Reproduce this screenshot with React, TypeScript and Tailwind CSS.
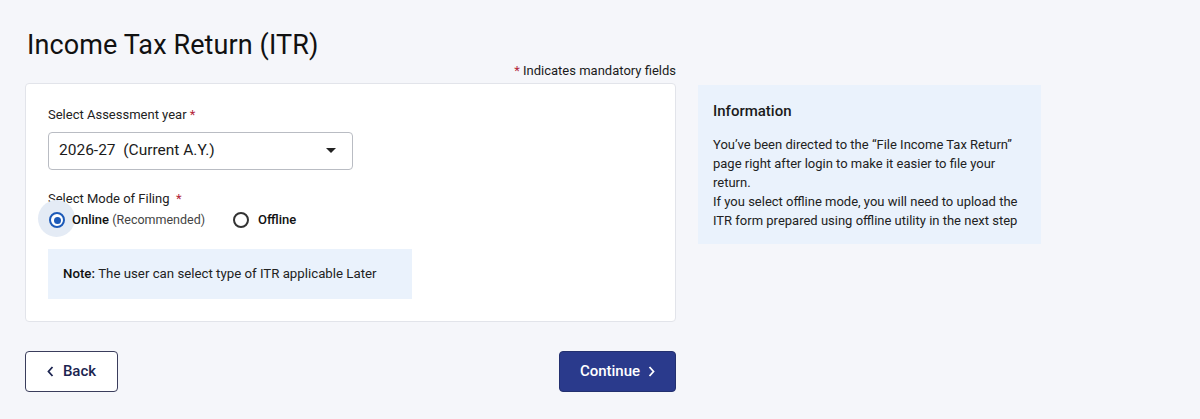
export default function App() {
  return (
    <main
      className="min-h-screen w-full bg-[#f5f6fa] text-[#1b1b1b] pl-[25px] pt-[27px]"
      style={{ fontFamily: "Roboto, 'Noto Sans', sans-serif" }}
    >
      <h1 className="text-[27px] leading-[36px] font-normal text-[#111] ml-[2px] tracking-[0.1px]">Income Tax Return (ITR)</h1>
      <div className="flex items-start gap-[22px]">
        <div className="w-[651px]">
          <p className="text-right text-[13px] leading-[18px] text-[#1b1b1b] mt-[-1px] mb-[3px]">
            <span className="text-[#b3263a]">*</span> Indicates mandatory fields
          </p>
          <section className="bg-white border border-[#e2e4ea] rounded-[4px] h-[239px] pl-[22px] pt-[22px]">
            <label className="block text-[13px] leading-[18px] text-[#222]">
              Select Assessment year <span className="text-[#b3263a]">*</span>
            </label>
            <div className="mt-[8px] w-[305px] h-[38px] border border-[#b9bcc3] rounded-[4px] flex items-center justify-between pl-[10px] pr-[16px]">
              <span className="text-[15.5px] text-[#1b1b1b] whitespace-pre">2026-27  (Current A.Y.)</span>
              <svg width="10" height="6" viewBox="0 0 10 6">
                <path d="M0 0 L10 0 L5 5 Z" fill="#222" />
              </svg>
            </div>
            <label className="block mt-[20px] text-[13px] leading-[18px] text-[#222]">
              Select Mode of Filing&nbsp; <span className="text-[#b3263a]">*</span>
            </label>
            <div className="flex items-center mt-[1px] h-[22px]">
              <div className="relative flex items-center">
                <span className="absolute left-[-10px] top-[-10px] w-[37px] h-[37px] rounded-full bg-[#e4ebf5]" />
                <span className="relative ml-[1px] w-[16px] h-[16px] rounded-full border-2 border-[#1d5ab8] flex items-center justify-center bg-white">
                  <span className="w-[7px] h-[7px] rounded-full bg-[#1d5ab8]" />
                </span>
                <span className="relative ml-[7px] text-[13px]">
                  <span className="font-medium text-[#111]">Online</span>{" "}
                  <span className="text-[12.5px] text-[#444]">(Recommended)</span>
                </span>
              </div>
              <div className="flex items-center ml-[28px]">
                <span className="w-[16px] h-[16px] rounded-full border-2 border-[#333] bg-white" />
                <span className="ml-[9px] text-[13px] font-medium text-[#111]">Offline</span>
              </div>
            </div>
            <div className="mt-[18px] w-[364px] h-[50px] bg-[#eaf2fc] flex items-center pl-[15px] text-[13.25px] text-[#222]">
              <span className="font-medium text-[#111]">Note:</span>&nbsp;The user can select type of ITR applicable Later
            </div>
          </section>
          <div className="flex justify-between mt-[29px]">
            <button
              type="button"
              className="w-[93px] h-[41px] border border-[#3a3d5c] rounded-[4px] bg-white flex items-center justify-center gap-[9px] text-[15px] font-medium text-[#1b2450]"
            >
              <svg width="7" height="11" viewBox="0 0 7 11">
                <path d="M5.5 1 L1.5 5.5 L5.5 10" fill="none" stroke="#1b2450" strokeWidth="1.8" />
              </svg>
              Back
            </button>
            <button
              type="button"
              className="w-[117px] h-[41px] rounded-[4px] bg-[#2a3a8c] border border-[#23306f] flex items-center justify-center gap-[8px] text-[15px] font-medium text-white"
            >
              Continue
              <svg width="7" height="11" viewBox="0 0 7 11">
                <path d="M1.5 1 L5.5 5.5 L1.5 10" fill="none" stroke="#fff" strokeWidth="1.8" />
              </svg>
            </button>
          </div>
        </div>
        <aside className="mt-[22px] w-[343px] h-[159px] bg-[#eaf2fc] pl-[15px] pt-[16px]">
          <h2 className="text-[15px] leading-[20px] font-medium text-[#1b1b1b]">Information</h2>
          <p className="mt-[14px] text-[13px] leading-[19px] text-[#222] w-[320px]">
            You’ve been directed to the “File Income Tax Return” page right after login to make it easier to file your return.
            <br />
            If you select offline mode, you will need to upload the ITR form prepared using offline utility in the next step
          </p>
        </aside>
      </div>
    </main>
  );
}
